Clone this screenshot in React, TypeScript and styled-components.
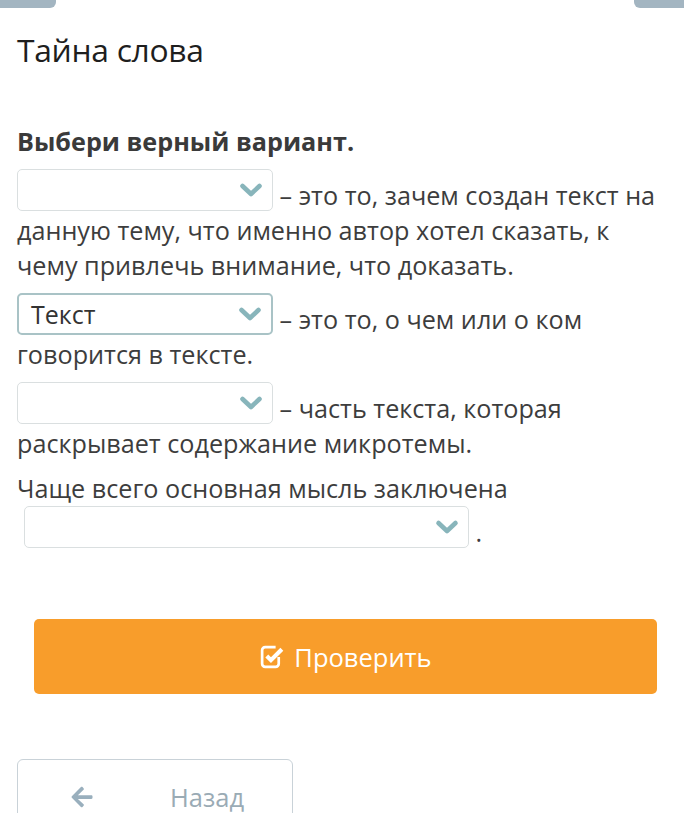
import React from 'react';
import styled, { createGlobalStyle } from 'styled-components';
import { FaArrowLeft } from 'react-icons/fa';

const GlobalStyle = createGlobalStyle`
  html, body {
    margin: 0;
    padding: 0;
    background: #fff;
  }
  body {
    font-family: "Open Sans", "Liberation Sans", sans-serif;
    color: #3b3b3b;
  }
`;

const Page = styled.div`
  position: relative;
  width: 684px;
  height: 813px;
  overflow: hidden;
  background: #fff;
`;

const TopBar = styled.div`
  display: flex;
  justify-content: space-between;
  height: 8px;
`;

const TopTab = styled.div<{ $side: 'left' | 'right' }>`
  width: ${(p) => (p.$side === 'left' ? '56px' : '50px')};
  height: 8px;
  background: #a3b5c1;
  border-radius: ${(p) => (p.$side === 'left' ? '0 0 6px 0' : '0 0 0 6px')};
`;

const Content = styled.div`
  padding: 0 17px;
`;

const Title = styled.h1`
  margin: 22px 0 0;
  font-size: 31.8px;
  font-weight: 400;
  line-height: 40px;
  color: #1e1e1e;
  letter-spacing: -0.3px;
`;

const Heading = styled.h2`
  margin: 56px 0 0;
  font-size: 25.2px;
  font-weight: 700;
  line-height: 30px;
  color: #3a3a3a;
`;

const Paragraph = styled.p`
  margin: 10px 0 0;
  font-size: 25.2px;
  line-height: 35px;
  color: #3d3d3d;

  &:first-of-type {
    margin-top: 13px;
  }
`;

const SelectBox = styled.span<{ $width: number; $active?: boolean; $indent?: number }>`
  display: inline-flex;
  align-items: center;
  justify-content: space-between;
  box-sizing: border-box;
  width: ${(p) => p.$width}px;
  height: 42px;
  margin-left: ${(p) => p.$indent ?? 0}px;
  padding: 0 9px 0 12px;
  vertical-align: 5px;
  border: ${(p) => (p.$active ? '2px solid #a9c3c6' : '1px solid #dadfe0')};
  border-radius: 5px;
  background: #fff;
  font-size: 25px;
  line-height: 34px;
  color: #333;
`;

const SelectValue = styled.span`
  white-space: nowrap;
`;

const Chevron = () => (
  <svg width="24" height="16" viewBox="0 0 24 16">
    <path d="M3.5 4 L12 12 L20.5 4" fill="none" stroke="#88b5bb" strokeWidth="4.6" strokeLinecap="round" strokeLinejoin="round" />
  </svg>
);

const Select = ({ width, value, active, indent }: { width: number; value?: string; active?: boolean; indent?: number }) => (
  <SelectBox $width={width} $active={active} $indent={indent}>
    <SelectValue>{value ?? '\u00a0'}</SelectValue>
    <Chevron />
  </SelectBox>
);

const CheckButton = styled.button`
  display: flex;
  align-items: center;
  justify-content: center;
  gap: 8px;
  box-sizing: border-box;
  width: 623px;
  height: 75px;
  margin: 69px 0 0 34px;
  border: none;
  border-radius: 5px;
  background: #f89d2b;
  color: #fff;
  font-family: "Open Sans", "Liberation Sans", sans-serif;
  font-size: 25.5px;
`;

const CheckIcon = () => (
  <svg width="27" height="27" viewBox="0 0 26 26">
    <path d="M19 13.5 V20 a3 3 0 0 1 -3 3 H6 a3 3 0 0 1 -3 -3 V7 a3 3 0 0 1 3 -3 H16" fill="none" stroke="#fff" strokeWidth="2.6" />
    <path d="M7.5 12.5 L11.5 16.5 L22 6" fill="none" stroke="#fff" strokeWidth="4" strokeLinejoin="miter" />
  </svg>
);

const BackButton = styled.button`
  display: flex;
  align-items: center;
  box-sizing: border-box;
  width: 276px;
  height: 76px;
  margin: 65px 0 0 17px;
  padding: 0 0 0 52px;
  border: 1px solid #c9d2d8;
  border-radius: 6px;
  background: #fff;
  color: #9aabb5;
  font-family: "Open Sans", "Liberation Sans", sans-serif;
  font-size: 25.5px;

  svg {
    color: #99afbd;
    margin-right: 76px;
  }
`;

export default function App() {
  return (
    <Page>
      <GlobalStyle />
      <TopBar>
        <TopTab $side="left" />
        <TopTab $side="right" />
      </TopBar>
      <Content>
        <Title>Тайна слова</Title>
        <Heading>Выбери верный вариант.</Heading>
        <Paragraph>
          <Select width={256} /> – это то, зачем создан текст на данную тему, что именно автор хотел
          сказать, к чему привлечь внимание, что доказать.
        </Paragraph>
        <Paragraph>
          <Select width={256} value="Текст" active /> – это то, о чем или о ком говорится в тексте.
        </Paragraph>
        <Paragraph>
          <Select width={256} /> – часть текста, которая раскрывает содержание микротемы.
        </Paragraph>
        <Paragraph>
          Чаще всего основная мысль заключена <Select width={445} indent={7} /> .
        </Paragraph>
      </Content>
      <CheckButton>
        <CheckIcon />
        Проверить
      </CheckButton>
      <BackButton>
        <FaArrowLeft size={24} />
        Назад
      </BackButton>
    </Page>
  );
}
